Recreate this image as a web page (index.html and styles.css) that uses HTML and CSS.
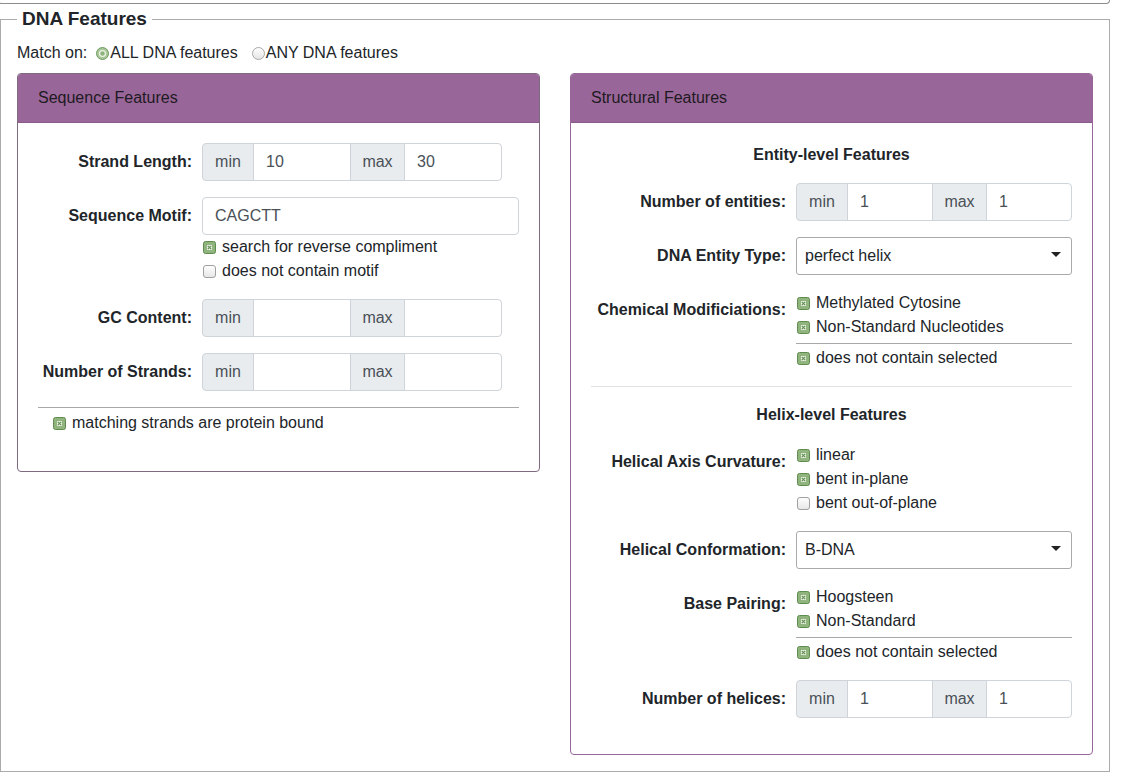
FILE: index.html
```html
<!DOCTYPE html>
<html>
<head>
<meta charset="utf-8">
<title>DNA Features</title>
<link rel="stylesheet" href="styles.css">
</head>
<body>
<div class="topbar"></div>
<fieldset class="dna">
  <legend>DNA Features</legend>
  <div class="match">
    <span class="match-label">Match on:</span>
    <label class="radio"><svg class="rb" viewBox="0 0 13 13"><circle cx="6.5" cy="6.5" r="6" fill="#a8c798" stroke="#6f9b60"/><circle cx="6.5" cy="6.5" r="3.6" fill="#eef4e9"/><circle cx="6.5" cy="6.5" r="2.3" fill="#8db37c"/></svg>ALL DNA features</label>
    <label class="radio radio-any"><svg class="rb" viewBox="0 0 13 13"><defs><linearGradient id="rg" x1="0" y1="0" x2="0" y2="1"><stop offset="0" stop-color="#ffffff"/><stop offset="1" stop-color="#e4e4e4"/></linearGradient></defs><circle cx="6.5" cy="6.5" r="6" fill="url(#rg)" stroke="#a8a8a8"/></svg>ANY DNA features</label>
  </div>

  <div class="panels">
    <section class="card card-seq">
      <div class="card-header">Sequence Features</div>
      <div class="card-body">
        <div class="frow">
          <label class="flabel">Strand Length:</label>
          <div class="fctrl">
            <div class="igroup ig-left">
              <span class="addon addon-min">min</span><input class="ginput" value="10"><span class="addon addon-max">max</span><input class="ginput" value="30">
            </div>
          </div>
        </div>
        <div class="frow">
          <label class="flabel">Sequence Motif:</label>
          <div class="fctrl">
            <input class="tinput" value="CAGCTT">
            <div class="check"><svg class="cb" viewBox="0 0 13 13"><rect x=".5" y=".5" width="12" height="12" rx="2" fill="#8fb47c" stroke="#5f8b50"/><rect x="3.5" y="3.5" width="6" height="6" fill="#e8f0e1" stroke="#7aa068" stroke-width=".6"/><path d="M4.8 4.8l3.4 3.4M8.2 4.8l-3.4 3.4" stroke="#5f8b50" stroke-width="1.1"/></svg>search for reverse compliment</div>
            <div class="check"><svg class="cb" viewBox="0 0 13 13"><defs><linearGradient id="cg" x1="0" y1="0" x2="0" y2="1"><stop offset="0" stop-color="#ffffff"/><stop offset="1" stop-color="#e6e6e6"/></linearGradient></defs><rect x=".5" y=".5" width="12" height="12" rx="2.5" fill="url(#cg)" stroke="#a0a0a0"/></svg>does not contain motif</div>
          </div>
        </div>
        <div class="frow">
          <label class="flabel">GC Content:</label>
          <div class="fctrl">
            <div class="igroup ig-left">
              <span class="addon addon-min">min</span><input class="ginput" value=""><span class="addon addon-max">max</span><input class="ginput" value="">
            </div>
          </div>
        </div>
        <div class="frow">
          <label class="flabel">Number of Strands:</label>
          <div class="fctrl">
            <div class="igroup ig-left">
              <span class="addon addon-min">min</span><input class="ginput" value=""><span class="addon addon-max">max</span><input class="ginput" value="">
            </div>
          </div>
        </div>
        <hr class="rule rule-dark">
        <div class="check check-indent"><svg class="cb" viewBox="0 0 13 13"><rect x=".5" y=".5" width="12" height="12" rx="2" fill="#8fb47c" stroke="#5f8b50"/><rect x="3.5" y="3.5" width="6" height="6" fill="#e8f0e1" stroke="#7aa068" stroke-width=".6"/><path d="M4.8 4.8l3.4 3.4M8.2 4.8l-3.4 3.4" stroke="#5f8b50" stroke-width="1.1"/></svg>matching strands are protein bound</div>
      </div>
    </section>

    <section class="card card-struct">
      <div class="card-header">Structural Features</div>
      <div class="card-body">
        <div class="subtitle">Entity-level Features</div>
        <div class="frow">
          <label class="flabel">Number of entities:</label>
          <div class="fctrl">
            <div class="igroup">
              <span class="addon addon-min">min</span><input class="ginput" value="1"><span class="addon addon-max">max</span><input class="ginput" value="1">
            </div>
          </div>
        </div>
        <div class="frow">
          <label class="flabel flabel-sel">DNA Entity Type:</label>
          <div class="fctrl">
            <div class="select"><span>perfect helix</span><svg class="caret" viewBox="0 0 10 5"><path d="M0 0h10L5 5z" fill="#222"/></svg></div>
          </div>
        </div>
        <div class="frow">
          <label class="flabel">Chemical Modificiations:</label>
          <div class="fctrl">
            <div class="check"><svg class="cb" viewBox="0 0 13 13"><rect x=".5" y=".5" width="12" height="12" rx="2" fill="#8fb47c" stroke="#5f8b50"/><rect x="3.5" y="3.5" width="6" height="6" fill="#e8f0e1" stroke="#7aa068" stroke-width=".6"/><path d="M4.8 4.8l3.4 3.4M8.2 4.8l-3.4 3.4" stroke="#5f8b50" stroke-width="1.1"/></svg>Methylated Cytosine</div>
            <div class="check"><svg class="cb" viewBox="0 0 13 13"><rect x=".5" y=".5" width="12" height="12" rx="2" fill="#8fb47c" stroke="#5f8b50"/><rect x="3.5" y="3.5" width="6" height="6" fill="#e8f0e1" stroke="#7aa068" stroke-width=".6"/><path d="M4.8 4.8l3.4 3.4M8.2 4.8l-3.4 3.4" stroke="#5f8b50" stroke-width="1.1"/></svg>Non-Standard Nucleotides</div>
            <hr class="rule rule-sub">
            <div class="check"><svg class="cb" viewBox="0 0 13 13"><rect x=".5" y=".5" width="12" height="12" rx="2" fill="#8fb47c" stroke="#5f8b50"/><rect x="3.5" y="3.5" width="6" height="6" fill="#e8f0e1" stroke="#7aa068" stroke-width=".6"/><path d="M4.8 4.8l3.4 3.4M8.2 4.8l-3.4 3.4" stroke="#5f8b50" stroke-width="1.1"/></svg>does not contain selected</div>
          </div>
        </div>
        <hr class="rule rule-light">
        <div class="subtitle">Helix-level Features</div>
        <div class="frow">
          <label class="flabel">Helical Axis Curvature:</label>
          <div class="fctrl">
            <div class="check"><svg class="cb" viewBox="0 0 13 13"><rect x=".5" y=".5" width="12" height="12" rx="2" fill="#8fb47c" stroke="#5f8b50"/><rect x="3.5" y="3.5" width="6" height="6" fill="#e8f0e1" stroke="#7aa068" stroke-width=".6"/><path d="M4.8 4.8l3.4 3.4M8.2 4.8l-3.4 3.4" stroke="#5f8b50" stroke-width="1.1"/></svg>linear</div>
            <div class="check"><svg class="cb" viewBox="0 0 13 13"><rect x=".5" y=".5" width="12" height="12" rx="2" fill="#8fb47c" stroke="#5f8b50"/><rect x="3.5" y="3.5" width="6" height="6" fill="#e8f0e1" stroke="#7aa068" stroke-width=".6"/><path d="M4.8 4.8l3.4 3.4M8.2 4.8l-3.4 3.4" stroke="#5f8b50" stroke-width="1.1"/></svg>bent in-plane</div>
            <div class="check"><svg class="cb" viewBox="0 0 13 13"><rect x=".5" y=".5" width="12" height="12" rx="2.5" fill="url(#cg)" stroke="#a0a0a0"/></svg>bent out-of-plane</div>
          </div>
        </div>
        <div class="frow">
          <label class="flabel flabel-sel">Helical Conformation:</label>
          <div class="fctrl">
            <div class="select"><span>B-DNA</span><svg class="caret" viewBox="0 0 10 5"><path d="M0 0h10L5 5z" fill="#222"/></svg></div>
          </div>
        </div>
        <div class="frow">
          <label class="flabel">Base Pairing:</label>
          <div class="fctrl">
            <div class="check"><svg class="cb" viewBox="0 0 13 13"><rect x=".5" y=".5" width="12" height="12" rx="2" fill="#8fb47c" stroke="#5f8b50"/><rect x="3.5" y="3.5" width="6" height="6" fill="#e8f0e1" stroke="#7aa068" stroke-width=".6"/><path d="M4.8 4.8l3.4 3.4M8.2 4.8l-3.4 3.4" stroke="#5f8b50" stroke-width="1.1"/></svg>Hoogsteen</div>
            <div class="check"><svg class="cb" viewBox="0 0 13 13"><rect x=".5" y=".5" width="12" height="12" rx="2" fill="#8fb47c" stroke="#5f8b50"/><rect x="3.5" y="3.5" width="6" height="6" fill="#e8f0e1" stroke="#7aa068" stroke-width=".6"/><path d="M4.8 4.8l3.4 3.4M8.2 4.8l-3.4 3.4" stroke="#5f8b50" stroke-width="1.1"/></svg>Non-Standard</div>
            <hr class="rule rule-sub">
            <div class="check"><svg class="cb" viewBox="0 0 13 13"><rect x=".5" y=".5" width="12" height="12" rx="2" fill="#8fb47c" stroke="#5f8b50"/><rect x="3.5" y="3.5" width="6" height="6" fill="#e8f0e1" stroke="#7aa068" stroke-width=".6"/><path d="M4.8 4.8l3.4 3.4M8.2 4.8l-3.4 3.4" stroke="#5f8b50" stroke-width="1.1"/></svg>does not contain selected</div>
          </div>
        </div>
        <div class="frow">
          <label class="flabel">Number of helices:</label>
          <div class="fctrl">
            <div class="igroup">
              <span class="addon addon-min">min</span><input class="ginput" value="1"><span class="addon addon-max">max</span><input class="ginput" value="1">
            </div>
          </div>
        </div>
      </div>
    </section>
  </div>
</fieldset>
</body>
</html>
```

FILE: styles.css
```css
html, body {
  margin: 0;
  padding: 0;
  background: #ffffff;
}

body {
  font-family: "Liberation Sans", Arial, sans-serif;
  font-size: 16px;
  line-height: 24px;
  color: #212529;
  overflow: hidden;
}

.topbar {
  width: 1110px;
  height: 3px;
  margin-left: -2px;
  border: 1px solid #8c8c8c;
  border-top: 0;
  border-radius: 0 0 5px 5px;
}

.dna {
  box-sizing: border-box;
  width: 1110px;
  margin: 3px 0 0 0;
  padding: 0 16px 16px 16px;
  border: 1px solid #ababab;
  min-inline-size: 0;
}

.dna legend {
  padding: 0 5px;
  margin: 0;
  font-size: 19px;
  font-weight: bold;
  line-height: 24px;
  color: #212529;
}

.match {
  display: flex;
  align-items: center;
  height: 24px;
  margin-top: 10px;
  margin-bottom: 8px;
}

.match-label {
  margin-right: 9px;
}

.radio {
  display: flex;
  align-items: center;
}

.radio-any {
  margin-left: 14px;
}

.rb {
  width: 13px;
  height: 13px;
  margin-right: 1px;
  flex: none;
}

.panels {
  display: grid;
  grid-template-columns: 523px 523px;
  column-gap: 30px;
  align-items: start;
}

.card {
  border: 1px solid #996699;
  border-radius: 4px;
  overflow: hidden;
  background: #fff;
}

.card-seq {
  border-color: #7f6a80;
}

.card-header {
  background: #996699;
  padding: 12px 20px;
  line-height: 24px;
  border-bottom: 1px solid #8a5a8a;
  color: #1e1a22;
}

.card-body {
  padding: 20px;
}

.card-seq .card-body {
  padding-bottom: 36px;
}

.frow {
  display: grid;
  column-gap: 10px;
  margin-bottom: 16px;
}

.card-seq .frow {
  grid-template-columns: 154px minmax(0, 1fr);
}

.card-struct .frow {
  grid-template-columns: 195px minmax(0, 1fr);
}

.fctrl {
  min-width: 0;
}

.flabel {
  text-align: right;
  font-weight: bold;
  padding-top: 7px;
  line-height: 24px;
  white-space: nowrap;
}

.flabel-sel {
  padding-top: 7px;
}

.igroup {
  display: flex;
  height: 38px;
  width: 100%;
}

.ig-left {
  width: 300px;
}

.addon {
  box-sizing: border-box;
  display: flex;
  align-items: center;
  justify-content: center;
  background: #e9ecef;
  border: 1px solid #ced4da;
  color: #495057;
  flex: none;
}

.addon-min {
  width: 52px;
  border-radius: 4px 0 0 4px;
}

.addon-max {
  width: 55px;
  margin-left: -1px;
}

.ginput {
  box-sizing: border-box;
  flex: 1 1 0;
  width: 0;
  min-width: 0;
  height: 38px;
  margin: 0 0 0 -1px;
  padding: 0 12px;
  border: 1px solid #ced4da;
  font-family: "Liberation Sans", Arial, sans-serif;
  font-size: 16px;
  color: #495057;
  background: #fff;
  outline: none;
}

.ginput:last-child {
  border-radius: 0 4px 4px 0;
}

.tinput {
  box-sizing: border-box;
  display: block;
  width: 100%;
  height: 38px;
  margin: 0;
  padding: 0 12px;
  border: 1px solid #ced4da;
  border-radius: 4px;
  font-family: "Liberation Sans", Arial, sans-serif;
  font-size: 16px;
  color: #495057;
  background: #fff;
  outline: none;
}

.check {
  display: flex;
  align-items: center;
  height: 24px;
  white-space: nowrap;
}

.cb {
  width: 13px;
  height: 13px;
  margin-left: 1px;
  margin-right: 6px;
  flex: none;
}

.check-indent {
  padding-left: 14px;
}

.rule {
  border: 0;
  height: 0;
}

.rule-dark {
  margin: 0 0 3px 0;
  border-top: 1px solid #a8a8a8;
}

.rule-sub {
  margin: 4px 0 2px 0;
  border-top: 1px solid #a8a8a8;
}

.rule-light {
  margin: 0 0 16px 0;
  border-top: 1px solid #e2e2e2;
}

.subtitle {
  text-align: center;
  font-weight: bold;
  line-height: 24px;
  margin-bottom: 16px;
}

.select {
  box-sizing: border-box;
  display: flex;
  align-items: center;
  justify-content: space-between;
  height: 38px;
  padding: 0 10px 0 8px;
  border: 1px solid #aaaaaa;
  border-radius: 3px;
  background: #fff;
  color: #212529;
}

.caret {
  width: 10px;
  height: 5px;
  margin-bottom: 3px;
}
```
